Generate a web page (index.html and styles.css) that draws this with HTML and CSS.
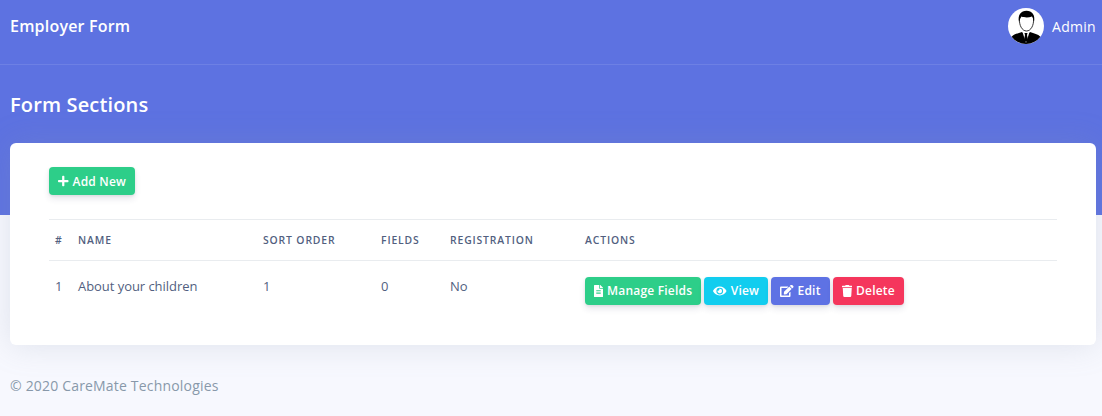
FILE: index.html
```html
<!DOCTYPE html>
<html lang="en">
<head>
  <meta charset="UTF-8" />
  <title>Form Sections</title>
  <link rel="stylesheet" href="styles.css">
</head>
<body>
  <div class="hero">
    <nav class="topbar">
      <span class="brand">Employer Form</span>
      <div class="user">
        <svg class="avatar" viewBox="0 0 36 36">
          <circle cx="18" cy="18" r="18" fill="#fff"/>
          <path d="M3.6 28.800C6 26 10 25.500 14 24l4 3 4-3c4 1.500 8 2 10.400 4.800a18 18 0 0 1-28.800 0z" fill="#000"/>
          <path d="M14.500 24h7L18 35z" fill="#fff"/>
          <path d="M16.500 25h3l-.5 2 1 5-2 2-2-2 1-5z" fill="#000"/>
          <path d="M11.500 11c-.5 6 2.500 12 7 12s7.500-6 7-12" fill="none" stroke="#000" stroke-width=".8"/>
          <path d="M11 14C9.500 7 13 2.800 18.500 2.800S27.500 7 26 14c-.5-2.500-1-4-2-5.500-4 1.500-8 1-10.500 0-1 1.500-2 3.500-2.500 5.500z" fill="#000"/>
        </svg>
        <span class="user-name">Admin</span>
      </div>
    </nav>
    <h1 class="page-title">Form Sections</h1>
  </div>

  <main class="card">
    <a class="btn btn-green add-btn" href="#">
      <svg class="icon" viewBox="0 0 448 512"><path d="M416 208H272V64c0-18-14-32-32-32h-32c-18 0-32 14-32 32v144H32c-18 0-32 14-32 32v32c0 18 14 32 32 32h144v144c0 18 14 32 32 32h32c18 0 32-14 32-32V304h144c18 0 32-14 32-32v-32c0-18-14-32-32-32z"/></svg>
      Add New
    </a>

    <table class="sections">
      <thead>
        <tr>
          <th class="col-num">#</th>
          <th class="col-name">Name</th>
          <th class="col-sort">Sort Order</th>
          <th class="col-fields">Fields</th>
          <th class="col-reg">Registration</th>
          <th>Actions</th>
        </tr>
      </thead>
      <tbody>
        <tr>
          <td>1</td>
          <td>About your children</td>
          <td>1</td>
          <td>0</td>
          <td>No</td>
          <td>
            <div class="actions">
              <a class="btn btn-green" href="#">
                <svg class="icon icon-file" viewBox="0 0 384 512"><path d="M224 136V0H24C11 0 0 11 0 24v464c0 13 11 24 24 24h336c13 0 24-11 24-24V160H248c-13 0-24-11-24-24zm64 236c0 7-5 12-12 12H108c-7 0-12-5-12-12v-8c0-7 5-12 12-12h168c7 0 12 5 12 12zm0-64c0 7-5 12-12 12H108c-7 0-12-5-12-12v-8c0-7 5-12 12-12h168c7 0 12 5 12 12zm0-72v8c0 7-5 12-12 12H108c-7 0-12-5-12-12v-8c0-7 5-12 12-12h168c7 0 12 5 12 12zm96-114v6H256V0h6c6 0 12 3 17 7l98 98c4 5 7 11 7 17z"/></svg>
                Manage Fields
              </a>
              <a class="btn btn-cyan" href="#">
                <svg class="icon icon-wide" viewBox="0 0 576 512"><path fill-rule="evenodd" d="M573 241C519 136 412 64 288 64S57 136 3 241a32 32 0 0 0 0 30c54 105 161 177 285 177s231-72 285-177a32 32 0 0 0 0-30zM288 400a144 144 0 1 1 0-288 144 144 0 0 1 0 288zm0-240a95 95 0 0 0-25 4 48 48 0 0 1-67 67 96 96 0 1 0 92-71z"/></svg>
                View
              </a>
              <a class="btn btn-blue" href="#">
                <svg class="icon icon-wide" viewBox="0 0 576 512"><path d="M403 70l90 90c4 4 4 10 0 14L275 392l-93 10c-12 2-23-9-21-21l10-93L389 70c4-4 10-4 14 0zm162-23l-49-49c-15-15-40-15-55 0l-35 35c-4 4-4 10 0 14l90 90c4 4 10 4 14 0l35-35c15-15 15-40 0-55zM384 346v102H64V128h230c3 0 6-1 8-3l40-40c8-8 2-21-8-21H48C21 64 0 85 0 112v352c0 27 21 48 48 48h352c27 0 48-21 48-48V306c0-11-13-16-21-9l-40 40c-2 2-3 6-3 9z"/></svg>
                Edit
              </a>
              <a class="btn btn-red" href="#">
                <svg class="icon" viewBox="0 0 448 512"><path d="M432 32H312l-9-19A24 24 0 0 0 281 0H167a24 24 0 0 0-22 13l-9 19H16A16 16 0 0 0 0 48v32a16 16 0 0 0 16 16h416a16 16 0 0 0 16-16V48a16 16 0 0 0-16-16zM53 467a48 48 0 0 0 48 45h246a48 48 0 0 0 48-45l21-339H32z"/></svg>
                Delete
              </a>
            </div>
          </td>
        </tr>
      </tbody>
    </table>
  </main>

  <footer class="footer">© 2020 CareMate Technologies</footer>
</body>
</html>
```

FILE: styles.css
```css
* {
  box-sizing: border-box;
}
body {
  margin: 0;
  font-family: "Open Sans", sans-serif;
  background: #f7f8fe;
  color: #525f7f;
}
.hero {
  height: 215px;
  background: #5d72e1;
  color: #fff;
}
.topbar {
  display: flex;
  align-items: center;
  justify-content: space-between;
  height: 65px;
  padding: 0 6px 12px 10px;
  border-bottom: 1px solid rgba(255, 255, 255, 0.1);
}
.brand {
  font-size: 16px;
  font-weight: 600;
  letter-spacing: 0.2px;
  line-height: 1;
}
.user {
  display: flex;
  align-items: center;
  gap: 8px;
}
.avatar {
  width: 36px;
  height: 36px;
}
.user-name {
  font-size: 14px;
  letter-spacing: 0.3px;
}
.page-title {
  margin: 28px 0 0 10px;
  font-size: 20px;
  font-weight: 600;
  letter-spacing: 0.15px;
  line-height: 24px;
}
.card {
  margin: -72px 6px 0 10px;
  padding: 24px 39px 34px;
  background: #fff;
  border-radius: 6px;
  box-shadow: 0 0 32px rgba(136, 152, 170, 0.22);
  position: relative;
}
.btn {
  display: inline-flex;
  align-items: center;
  gap: 4px;
  height: 28px;
  padding: 0 9px;
  border-radius: 4px;
  color: #fff;
  font-size: 12px;
  font-weight: 600;
  letter-spacing: 0.2px;
  text-decoration: none;
  white-space: nowrap;
  box-shadow: 0 4px 6px rgba(50, 50, 93, 0.11), 0 1px 3px rgba(0, 0, 0, 0.08);
}
.btn-green {
  background: #2dce89;
}
.btn-cyan {
  background: #11cdef;
}
.btn-blue {
  background: #5e72e4;
}
.btn-red {
  background: #f5365c;
}
.icon {
  width: 10.500px;
  height: 12px;
  fill: #fff;
  flex: none;
}
.icon-file {
  width: 9px;
}
.icon-wide {
  width: 13.500px;
}
.add-btn {
  margin-bottom: 24px;
}
.sections {
  width: 100%;
  border-collapse: collapse;
  table-layout: fixed;
}
.sections th {
  height: 41px;
  padding: 0 6px;
  border-top: 1px solid #e9ecef;
  border-bottom: 1px solid #e9ecef;
  text-align: left;
  font-size: 10.400px;
  font-weight: 600;
  letter-spacing: 0.85px;
  text-transform: uppercase;
  color: #525f7f;
}
.sections td {
  height: 50px;
  padding: 0 6px;
  font-size: 13px;
  letter-spacing: -0.05px;
  color: #525f7f;
}
.col-num {
  width: 23px;
}
.col-name {
  width: 185px;
}
.col-sort {
  width: 118px;
}
.col-fields {
  width: 69px;
}
.col-reg {
  width: 135px;
}
.actions {
  display: flex;
  gap: 3px;
  padding-top: 10px;
}
.footer {
  padding: 31px 10px 0;
  font-size: 14px;
  letter-spacing: 0.18px;
  color: #8898aa;
}
```
